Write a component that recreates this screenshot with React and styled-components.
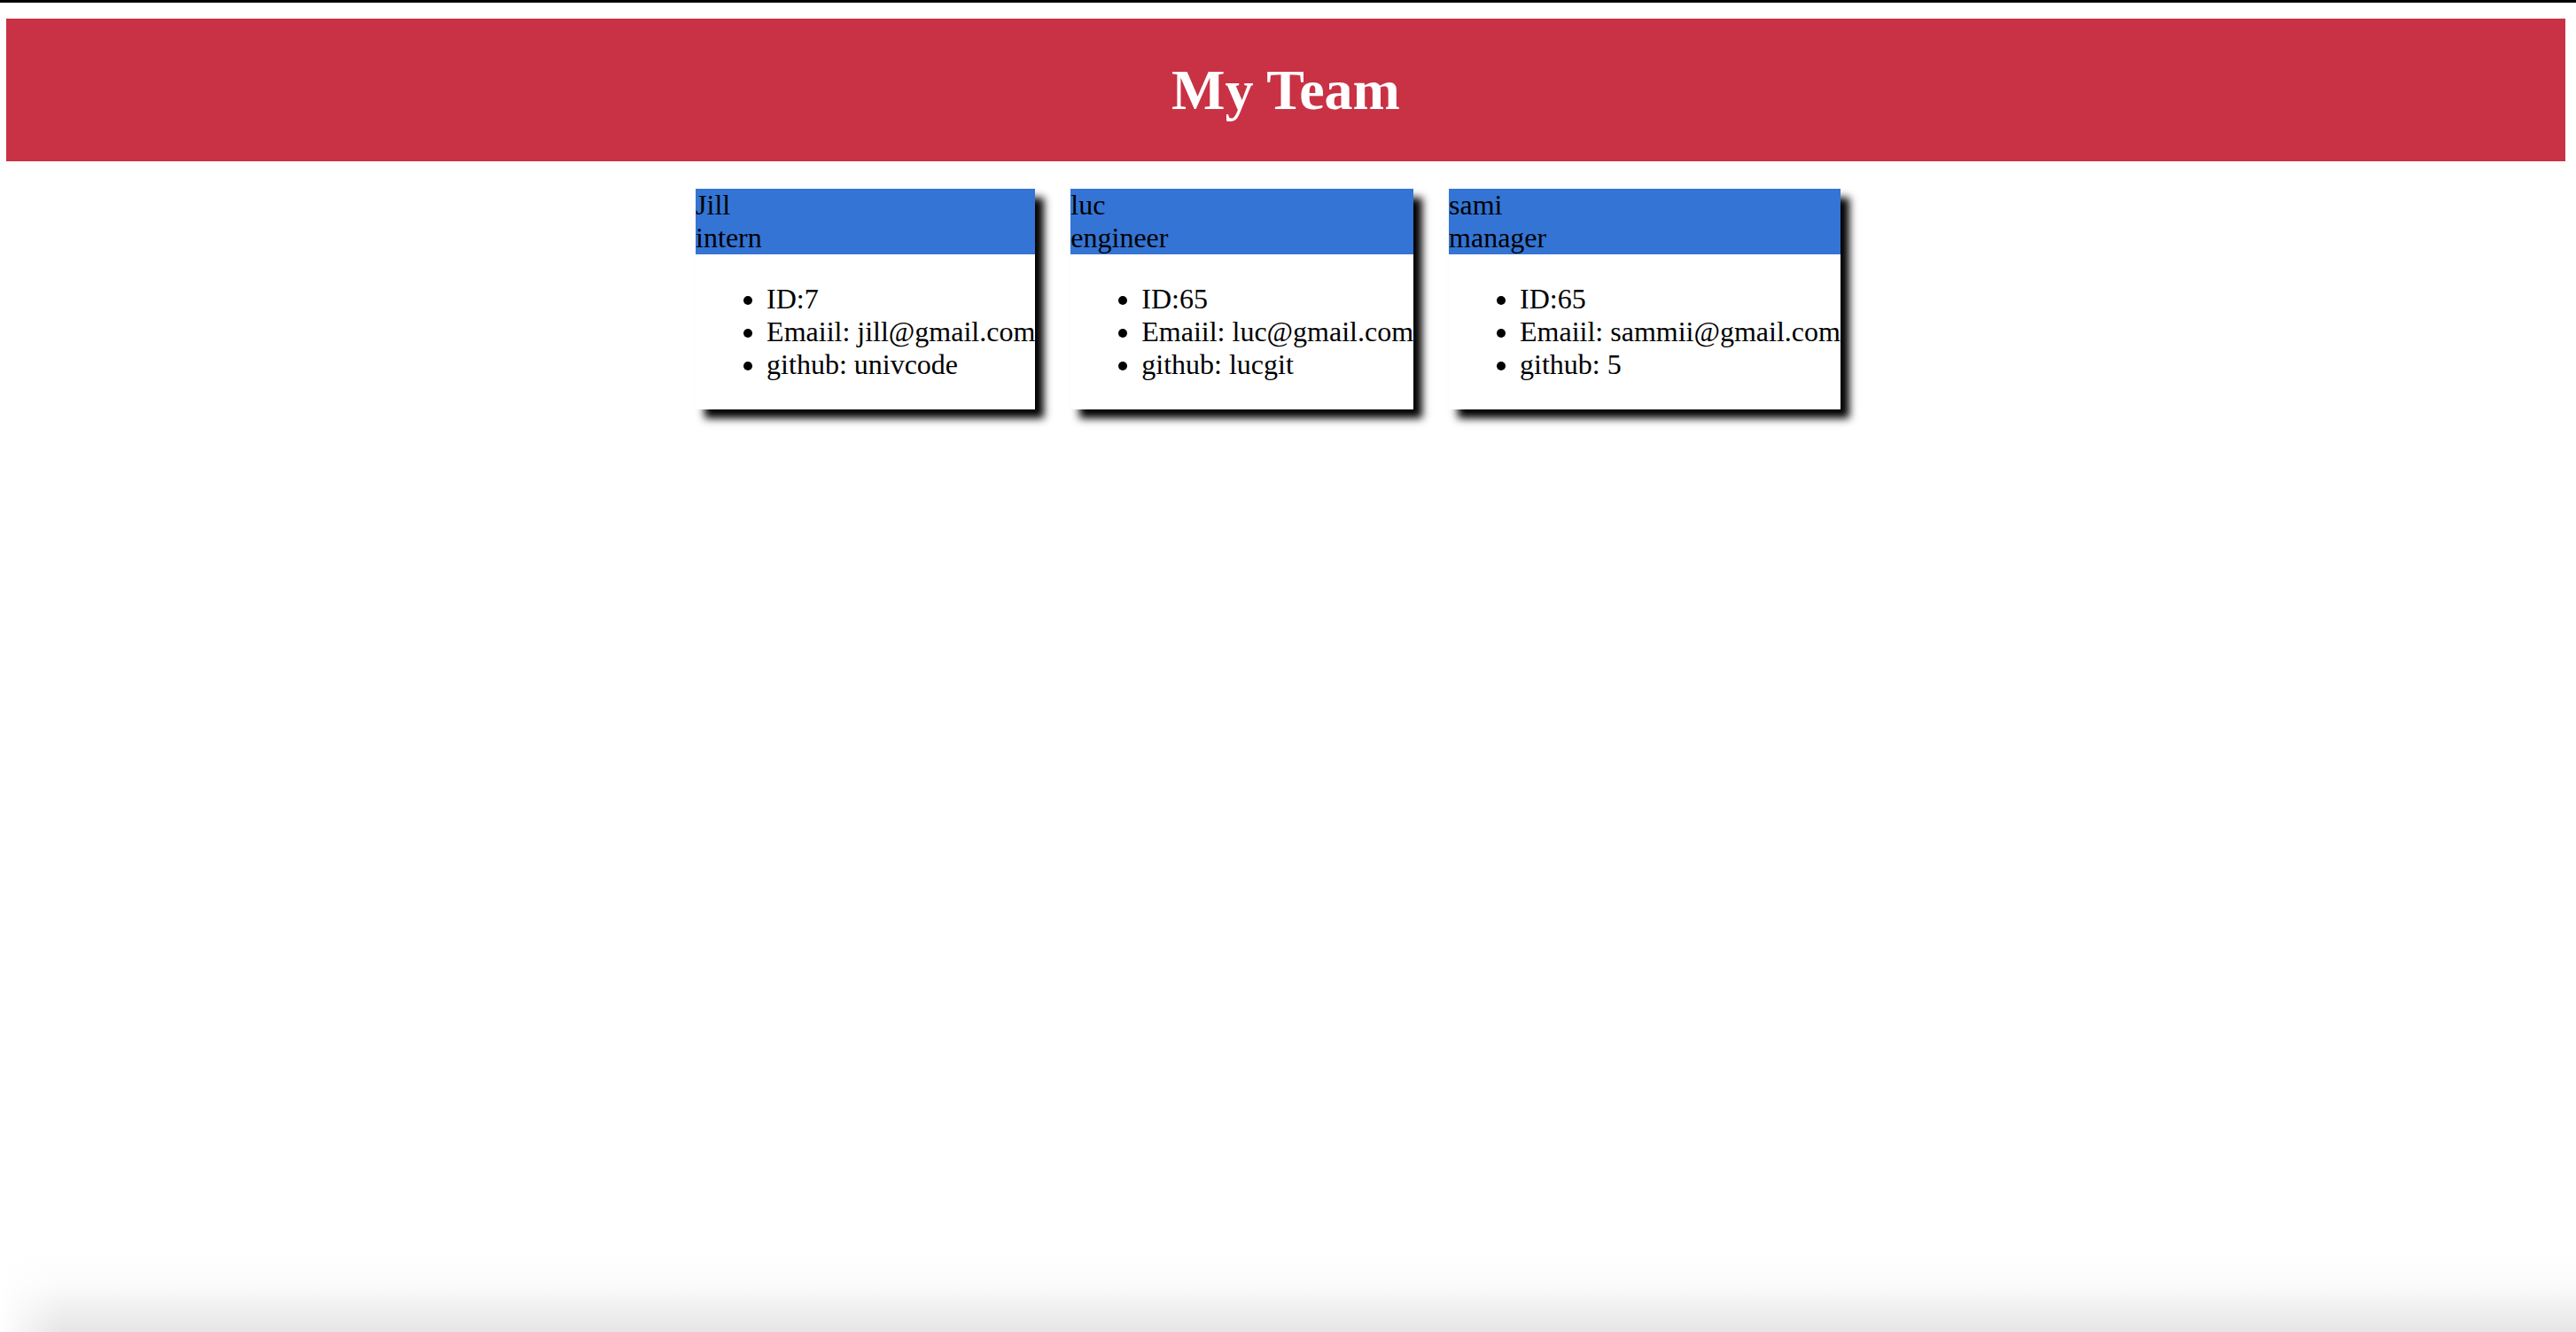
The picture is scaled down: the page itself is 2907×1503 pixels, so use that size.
import React from "react";
import styled, { createGlobalStyle } from "styled-components";

const GlobalStyle = createGlobalStyle`
  html {
    min-height: 100%;
    background-color: #ffffff;
    background-image:
      linear-gradient(to right, #ffffff 0px, rgba(255,255,255,0.6) 25px, rgba(255,255,255,0) 70px),
      linear-gradient(to bottom, rgba(0,0,0,0) 0%, rgba(0,0,0,0.015) 40%, rgba(0,0,0,0.1) 100%);
    background-repeat: no-repeat, no-repeat;
    background-position: 0 100%, 0 100%;
    background-size: 100% 90px, 100% 90px;
    background-attachment: fixed, fixed;
  }
  body {
    margin: 0;
    padding: 0;
    font-family: "Liberation Serif", "Times New Roman", serif;
    font-size: 32px;
    color: #000;
  }
`;

const TopEdge = styled.div`
  height: 3px;
  background: #000;
`;

const Page = styled.div`
  padding: 18px 12px 40px 7px;
`;

const Banner = styled.header`
  background: #c93244;
  padding: 44px 0 43px;
  display: flex;
  justify-content: center;
`;

const Title = styled.h1`
  margin: 0;
  font-family: "Liberation Serif", "Times New Roman", serif;
  font-size: 64px;
  font-weight: bold;
  color: #ffffff;
  line-height: normal;
`;

const CardRow = styled.main`
  display: flex;
  justify-content: center;
  align-items: flex-start;
  margin-top: 31px;
`;

const Card = styled.section`
  display: flow-root;
  background: #ffffff;
  margin-right: 40px;
  box-shadow: 10px 10px 9px #000;
  line-height: normal;
`;

const CardHead = styled.div`
  background: #3474d4;
  display: flex;
  flex-direction: column;
`;

const Line = styled.span`
  white-space: nowrap;
`;

const Details = styled.ul`
  margin: 32px 0;
  padding-left: 80px;
  list-style: disc;
`;

const Item = styled.li`
  white-space: nowrap;
`;

const team = [
  { name: "Jill", role: "intern", id: "7", email: "jill@gmail.com", extra: "github: univcode" },
  { name: "luc", role: "engineer", id: "65", email: "luc@gmail.com", extra: "github: lucgit" },
  { name: "sami", role: "manager", id: "65", email: "sammii@gmail.com", extra: "github: 5" },
];

export default function App() {
  return (
    <>
      <GlobalStyle />
      <TopEdge />
      <Page>
        <Banner>
          <Title>My Team</Title>
        </Banner>
        <CardRow>
          {team.map((m) => (
            <Card key={m.name}>
              <CardHead>
                <Line>{m.name}</Line>
                <Line>{m.role}</Line>
              </CardHead>
              <Details>
                <Item>ID:{m.id}</Item>
                <Item>Emaiil: {m.email}</Item>
                <Item>{m.extra}</Item>
              </Details>
            </Card>
          ))}
        </CardRow>
      </Page>
    </>
  );
}
